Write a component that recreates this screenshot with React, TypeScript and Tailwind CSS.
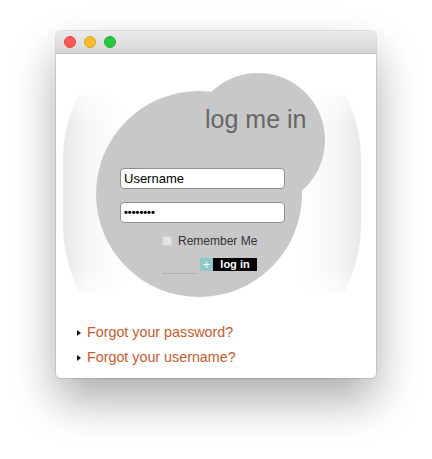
import React from "react";

export default function App() {
  return (
    <div className="w-[432px] h-[459px] bg-white overflow-hidden pt-[31px] pl-[56px]" style={{ fontFamily: '"Liberation Sans", Arial, sans-serif' }}>
      <div className="w-[320px] h-[347px] rounded-[5px] bg-white shadow-[0_22px_45px_rgba(0,0,0,0.33),0_0_0_1px_rgba(0,0,0,0.10)] overflow-hidden flex flex-col">
        {/* title bar */}
        <div className="h-[23px] shrink-0 bg-[linear-gradient(to_bottom,#ececec,#d6d6d6)] border-b border-[#c2c2c2] flex items-center pl-[8px] gap-[8px]">
          <div className="w-[12px] h-[12px] rounded-full bg-[#fc5b57] border border-[#e2463f]" />
          <div className="w-[12px] h-[12px] rounded-full bg-[#fdbb2e] border border-[#e0a12a]" />
          <div className="w-[12px] h-[12px] rounded-full bg-[#27c840] border border-[#1fab33]" />
        </div>
        {/* content */}
        <div className="relative flex-1 bg-white">
          {/* decorative shapes */}
          <div className="absolute left-0 top-[41px] w-full h-[200px] overflow-hidden">
            <div className="absolute left-[7px] top-[-84px] w-[298px] h-[362px] rounded-full bg-[linear-gradient(to_right,#e8e8e8,#f6f6f6_8%,#ffffff_22%,#ffffff_78%,#f6f6f6_92%,#e8e8e8)]" />
            <div className="absolute left-0 top-0 w-full h-full bg-[linear-gradient(to_bottom,rgba(255,255,255,0.6),rgba(255,255,255,0)_15%,rgba(255,255,255,0)_85%,rgba(255,255,255,0.6))]" />
          </div>
          <div className="absolute left-[40px] top-[37px] w-[206px] h-[206px] rounded-full bg-[#c8c8c8]" />
          <div className="absolute left-[135px] top-[19px] w-[134px] h-[134px] rounded-full bg-[#c8c8c8]" />

          {/* form */}
          <div className="relative flex flex-col pt-[53px]">
            <div className="ml-[149px] text-[25px] leading-[25px] text-[#666666]">log me in</div>
            <div className="ml-[64px] mt-[36px] w-[165px] h-[21px] rounded-[4px] border border-[#8f8f8f] bg-white flex items-center pl-[3px] text-[13px] text-black">
              Username
            </div>
            <div className="ml-[64px] mt-[13px] w-[165px] h-[21px] rounded-[4px] border border-[#8f8f8f] bg-white flex items-center pl-[3px] text-[11px] font-bold text-black">
              ••••••••
            </div>
            <div className="ml-[106px] mt-[11px] h-[14px] flex items-center gap-[6px]">
              <div className="w-[10px] h-[10px] bg-[#e3e3e3] border border-[#d0d0d0]" />
              <span className="text-[12px] leading-[14px] text-[#333333]">Remember Me</span>
            </div>
            <div className="ml-[107px] mt-[10px] flex items-end">
              <div className="w-[34px] h-[3px] mb-[-3px] border-b border-dotted border-[#9a9a9a] mr-[3px]" />
              <div className="w-[13px] h-[13px] bg-[#8fc7ca] text-white text-[13px] leading-[13px] flex items-center justify-center">+</div>
              <div className="w-[44px] h-[13px] bg-black text-white text-[11px] font-bold leading-[13px] flex items-center justify-center">log in</div>
            </div>
            <div className="ml-[21px] mt-[49px] flex flex-col">
              {["Forgot your password?", "Forgot your username?"].map((t) => (
                <div key={t} className="h-[25px] flex items-center">
                  <svg width="4" height="6" viewBox="0 0 4 6" className="mr-[6px]">
                    <path d="M0 0 L4 3 L0 6 Z" fill="#111" />
                  </svg>
                  <span className="text-[14.3px] text-[#c85a2c]">{t}</span>
                </div>
              ))}
            </div>
          </div>
        </div>
      </div>
    </div>
  );
}
